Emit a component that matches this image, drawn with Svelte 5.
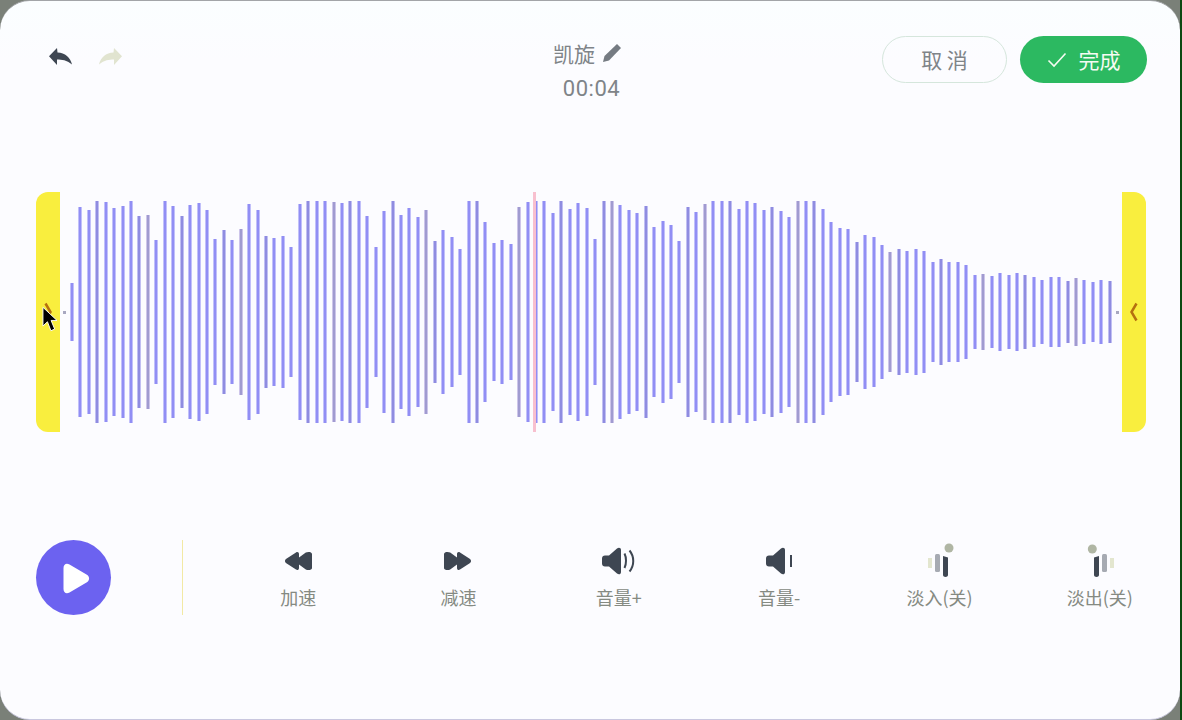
<script lang="ts">
	// half heights of the bars, left to right; 0 draws the small end dots
	const bars = [
		0, 29, 105, 102, 111, 110, 104, 106, 111, 96, 97, 72, 111, 106, 96, 107, 109, 102, 73, 82, 72,
		83, 108, 102, 76, 74, 76, 65, 108, 111, 111, 111, 110, 109, 111, 111, 96, 65, 101, 111, 97, 104,
		95, 102, 71, 82, 75, 63, 111, 111, 90, 69, 72, 68, 105, 110, 111, 111, 99, 111, 103, 109, 104,
		73, 111, 111, 107, 102, 99, 106, 85, 91, 87, 71, 105, 100, 108, 111, 111, 111, 103, 111, 109,
		102, 105, 101, 95, 111, 111, 111, 103, 90, 84, 83, 70, 77, 75, 67, 60, 63, 61, 63, 61, 50, 53,
		50, 50, 47, 37, 38, 36, 39, 37, 39, 37, 35, 32, 35, 35, 31, 34, 32, 30, 32, 31, 0
	];

	const actions = [
		{ label: '加速', icon: 'slower' },
		{ label: '减速', icon: 'faster' },
		{ label: '音量+', icon: 'louder' },
		{ label: '音量-', icon: 'quieter' },
		{ label: '淡入(关)', icon: 'fadein' },
		{ label: '淡出(关)', icon: 'fadeout' }
	];

	const rewind =
		'M5 15c0-1 .5-1.800 1.300-2.300l9.700-6.300c1.500-1 3-.2 3 1.600v3.500l6.800-4.900C27.400 5.500 32 5.600 32 8v14c0 2.400-4.600 2.500-6.200 1.400L19 18.500V22c0 1.800-1.500 2.600-3 1.600l-9.700-6.300C5.500 16.800 5 16 5 15z';
	const speaker =
		'M1 12.500c0-1.800 1.200-3 3-3h4L16 2.500c1.800-1.500 4-.8 4 1.500v22c0 2.300-2.200 3-4 1.500L8 20.500H4c-1.800 0-3-1.200-3-3z';
	const arrow = 'M8 0 0 8.300 8 17v-5.500c5 0 9.500 .5 15 5C21.500 9.500 16 4.500 8.500 4.500z';
</script>

<div class="frame">
	<header class="top">
		<div class="history">
			<svg class="arrow" viewBox="0 0 24 18" aria-hidden="true"><path d={arrow} /></svg>
			<svg class="arrow redo" viewBox="0 0 24 18" aria-hidden="true"><path d={arrow} /></svg>
		</div>

		<div class="name">
			<div class="title">
				凯旋
				<svg class="pencil" viewBox="0 0 20 20" aria-hidden="true">
					<path d="M15 1 19 5 7 17.500 1 19 2.500 13z" />
				</svg>
			</div>
			<div class="time">00:04</div>
		</div>

		<div class="buttons">
			<button class="btn cancel">取 消</button>
			<button class="btn done">
				<svg class="check" viewBox="0 0 20 16" aria-hidden="true">
					<path d="M1.500 8.500 7 14 18.500 1.500" />
				</svg>
				完成
			</button>
		</div>
	</header>

	<section class="wave">
		<div class="handle left">
			<svg class="chev" viewBox="0 0 8 20" aria-hidden="true"><path d="M1.500 1.500l5 8.500-5 8.500" /></svg>
		</div>
		<div class="bars">
			{#each bars as h}
				<span class="bar" class:dot={h === 0} style="height: {h * 2 || 3}px"></span>
			{/each}
		</div>
		<div class="handle right">
			<svg class="chev" viewBox="0 0 8 20" aria-hidden="true"><path d="M6.500 1.500 1.500 10l5 8.500" /></svg>
		</div>
		<div class="playhead"></div>
		<svg class="cursor" viewBox="0 0 16 28" aria-hidden="true">
			<path d="M1 1v20l4.800-4.600L9.500 26l4-1.800-3.800-9.200H16z" />
		</svg>
	</section>

	<footer class="bottom">
		<button class="play" aria-label="播放">
			<svg viewBox="0 0 30 30" aria-hidden="true">
				<path d="M4.500 5c0-3.500 2.700-5.500 6-3.500l17 10c3.500 2 3.500 6 0 8l-17 10c-3.300 2-6 0-6-3.500z" />
			</svg>
		</button>
		<div class="divider"></div>
		<div class="actions">
			{#each actions as a}
				<div class="action">
					<svg class="icon" viewBox="0 0 36 30" aria-hidden="true">
						{#if a.icon === 'slower'}
							<path d={rewind} />
						{:else if a.icon === 'faster'}
							<path d={rewind} transform="translate(36) scale(-1 1)" />
						{:else if a.icon === 'louder'}
							<path d={speaker} />
							<path class="wavelet" d="M23.500 7.500c2 4 2 10.500 0 14.500" />
							<path class="wavelet" d="M28.500 4.500c5 6 5 15 0 21" />
						{:else if a.icon === 'quieter'}
							<path d={speaker} transform="translate(4)" />
							<path class="wavelet" d="M30 9v12" />
						{:else if a.icon === 'fadein'}
							<rect class="tint1" x="7" y="12" width="4" height="10" />
							<rect class="tint2" x="14" y="8" width="5" height="18" rx="1.500" />
							<path d="M22 10l5 1.500V29c0 2.500-5 2.500-5 0z" />
							<circle class="tint3" cx="28" cy="2" r="4.500" />
						{:else}
							<circle class="tint3" cx="10.300" cy="3" r="4.500" />
							<path d="M17 10l-5 1.500V29c0 2.500 5 2.500 5 0z" />
							<rect class="tint2" x="20" y="8" width="5" height="18" rx="1.500" />
							<rect class="tint1" x="28" y="12" width="4" height="10" />
						{/if}
					</svg>
					<span class="label">{a.label}</span>
				</div>
			{/each}
		</div>
	</footer>
</div>

<style>
	:global(body) {
		background: linear-gradient(to left, #0b4a12 2px, #7a8078 2px);
		overflow: hidden;
	}

	.frame {
		box-sizing: border-box;
		width: 1180px;
		height: 720px;
		border-radius: 30px;
		border-top: 1px solid #a3a5a8;
		border-bottom: 1px solid #c9c7df;
		background: linear-gradient(#fbfeff, #fcfcff 60px);
		font-family: 'Noto Sans CJK SC', 'Liberation Sans', sans-serif;
		color: #7f8488;
		padding: 35px 0 0 36px;
		display: flex;
		flex-direction: column;
	}

	.top {
		height: 156px;
		display: grid;
		grid-template-columns: 1fr auto 1fr;
		padding-right: 33px;
	}

	.history {
		display: flex;
		gap: 25px;
		padding: 12px 0 0 13px;
		height: 18px;
	}

	.arrow {
		width: 24px;
		height: 18px;
		fill: #3e4652;
	}

	.redo {
		fill: #e1e4d0;
		transform: scaleX(-1);
	}

	.name {
		display: flex;
		flex-direction: column;
		align-items: center;
		margin-left: -8px;
	}

	.title {
		display: flex;
		align-items: center;
		gap: 7px;
		font-size: 21px;
		line-height: 36px;
		margin-top: -1px;
	}

	.pencil {
		width: 20px;
		height: 20px;
		fill: #757b82;
	}

	.time {
		font-family: Roboto, sans-serif;
		font-size: 22px;
		line-height: 24px;
		letter-spacing: 0.5px;
		margin-top: 6px;
		padding-left: 8px;
	}

	.buttons {
		display: flex;
		justify-content: flex-end;
		gap: 13px;
	}

	.btn {
		box-sizing: border-box;
		height: 47px;
		border-radius: 24px;
		font-family: inherit;
		font-size: 21px;
		padding: 0 0 2px;
	}

	.cancel {
		width: 125px;
		background: none;
		border: 1px solid #d5e6dc;
		color: #7f8488;
	}

	.done {
		width: 127px;
		border: none;
		background: #2cb961;
		color: #f5fbf2;
		display: flex;
		align-items: center;
		justify-content: center;
		gap: 12px;
	}

	.check {
		width: 20px;
		height: 16px;
		fill: none;
		stroke: #f5fbf2;
		stroke-width: 1.600;
		margin-top: 2px;
	}

	.wave {
		position: relative;
		height: 240px;
		width: 1110px;
		display: flex;
		flex: none;
	}

	.handle {
		flex: none;
		width: 24px;
		background: #f9ee3e;
		display: flex;
		align-items: center;
		justify-content: center;
	}

	.handle.left {
		border-radius: 12px 0 0 12px;
	}

	.handle.right {
		border-radius: 0 12px 12px 0;
	}

	.chev {
		width: 8px;
		height: 20px;
		fill: none;
		stroke: #b5700f;
		stroke-width: 2.500;
	}

	.bars {
		flex: 1;
		display: flex;
		align-items: center;
		justify-content: space-between;
		padding: 0 2.500px;
	}

	.bar {
		width: 4px;
		background: linear-gradient(90deg, #dcdbfd, #918ef4 35%, #918ef4 65%, #dcdbfd);
	}

	.bar:nth-child(5n) {
		background: linear-gradient(90deg, #dcdbfd, #8f8ce0 35%, #8f8ce0 65%, #dcdbfd);
	}

	.bar:nth-child(11n) {
		background: linear-gradient(90deg, #e6dcf8, #a09bd0 35%, #a09bd0 65%, #e6dcf8);
	}

	.bar.dot {
		background: #a8a8c0;
		width: 3px;
	}

	.playhead {
		position: absolute;
		top: 0;
		left: 497px;
		width: 3px;
		height: 240px;
		background: #f8c0cf;
	}

	.cursor {
		position: absolute;
		left: 6px;
		top: 114px;
		width: 15px;
		height: 27px;
		fill: #000;
		stroke: #fff;
		stroke-width: 1;
	}

	.bottom {
		margin-top: 108px;
		display: flex;
		align-items: center;
		height: 75px;
	}

	.play {
		flex: none;
		width: 75px;
		height: 75px;
		border-radius: 50%;
		border: none;
		padding: 0;
		background: #6c62f0;
		display: flex;
		align-items: center;
		justify-content: center;
	}

	.play svg {
		width: 30px;
		height: 30px;
		fill: #fff;
		overflow: visible;
	}

	.divider {
		flex: none;
		width: 1px;
		height: 75px;
		margin: 0 35px 0 71px;
		background: #f2e9a4;
	}

	.actions {
		flex: 1;
		display: flex;
	}

	.action {
		flex: 1;
		display: flex;
		flex-direction: column;
		align-items: center;
		gap: 8px;
	}

	.icon {
		width: 36px;
		height: 30px;
		fill: #3e4652;
		overflow: visible;
	}

	.wavelet {
		fill: none;
		stroke: #3e4652;
		stroke-width: 2;
	}

	.tint1 {
		fill: #e3e6cf;
	}

	.tint2 {
		fill: #a6aab2;
	}

	.tint3 {
		fill: #b0b6a4;
	}

	.label {
		font-size: 18px;
		line-height: 26px;
		color: #858a82;
	}
</style>
